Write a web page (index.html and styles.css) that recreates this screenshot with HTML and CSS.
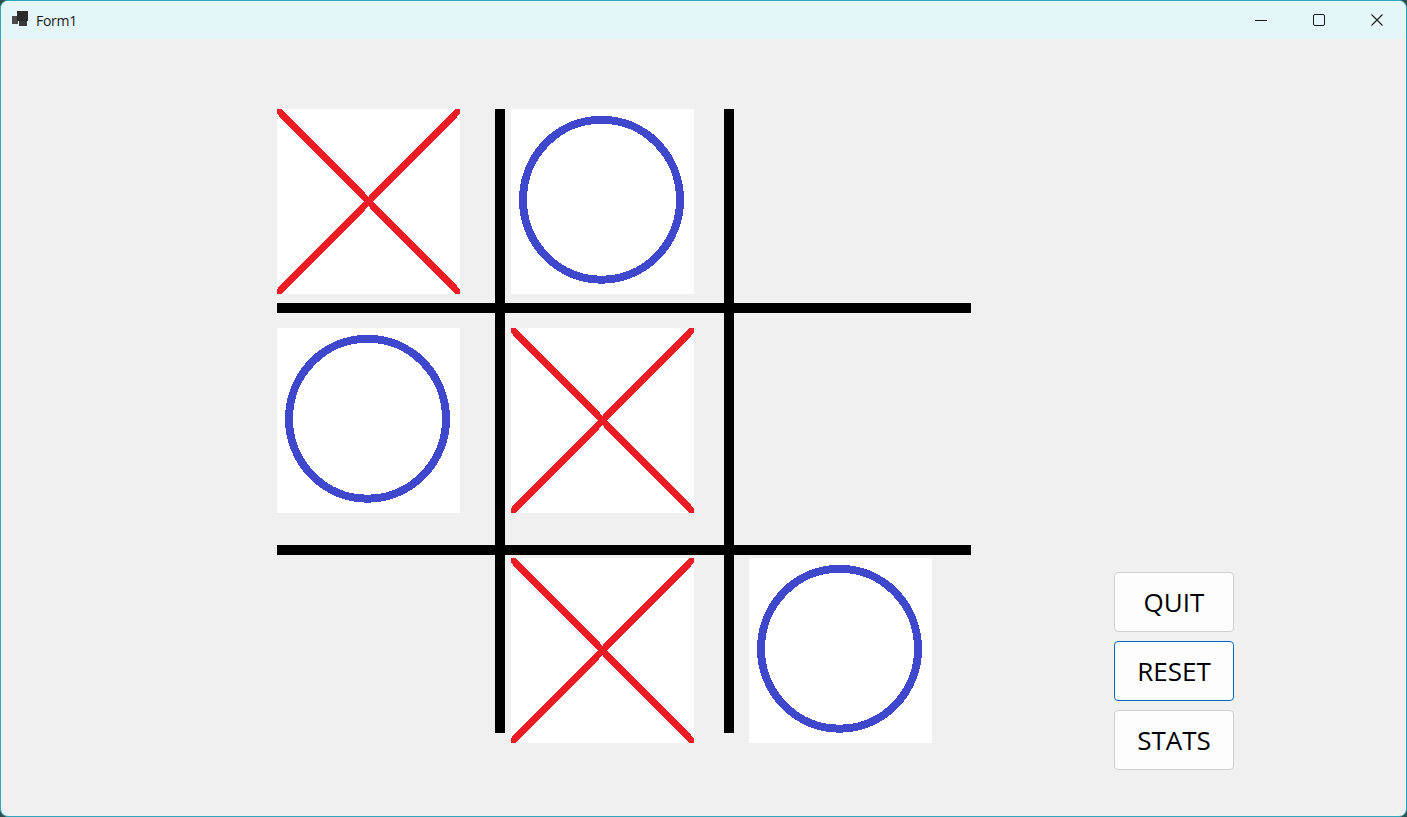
FILE: index.html
```html
<!DOCTYPE html>
<html lang="en">
<head>
  <meta charset="UTF-8" />
  <meta name="viewport" content="width=device-width, initial-scale=1.0"/>
  <title>Form1</title>
  <link rel="stylesheet" href="styles.css">
</head>
<body>
  <div class="window">
    <div class="titlebar">
      <svg class="app-icon" width="16" height="16" viewBox="0 0 16 16">
        <rect x="0" y="5" width="6" height="8" fill="#4a4a4a"/>
        <rect x="5" y="0" width="11" height="10" fill="#2b2b2b"/>
        <rect x="7" y="10" width="8" height="5" fill="#3a3a3a"/>
      </svg>
      <span class="title">Form1</span>
      <div class="controls">
        <span class="ctl">
          <svg width="12" height="12" viewBox="0 0 12 12"><line x1="0" y1="6.5" x2="12" y2="6.5" stroke="#1b1b1b" stroke-width="1"/></svg>
        </span>
        <span class="ctl">
          <svg width="12" height="12" viewBox="0 0 12 12"><rect x="0.5" y="0.5" width="11" height="11" rx="1.5" fill="none" stroke="#1b1b1b" stroke-width="1"/></svg>
        </span>
        <span class="ctl">
          <svg width="12" height="12" viewBox="0 0 12 12"><path d="M0.5 0.5 L11.5 11.5 M11.5 0.5 L0.5 11.5" stroke="#1b1b1b" stroke-width="1.1"/></svg>
        </span>
      </div>
    </div>

    <div class="client">
      <div class="board">
        <!-- row 1 -->
        <div class="cell r1 c1">
          <svg width="183" height="185" viewBox="0 0 183 185" shape-rendering="crispEdges">
            <path d="M0 0 L183 185 M183 0 L0 185" class="mark-x"/>
          </svg>
        </div>
        <div class="cell r1 c2">
          <svg width="183" height="185" viewBox="0 0 183 185" shape-rendering="crispEdges">
            <ellipse cx="90.5" cy="90.7" rx="78.5" ry="80" class="mark-o"/>
          </svg>
        </div>

        <!-- row 2 -->
        <div class="cell r2 c1">
          <svg width="183" height="185" viewBox="0 0 183 185" shape-rendering="crispEdges">
            <ellipse cx="90.5" cy="90.7" rx="78.5" ry="80" class="mark-o"/>
          </svg>
        </div>
        <div class="cell r2 c2">
          <svg width="183" height="185" viewBox="0 0 183 185" shape-rendering="crispEdges">
            <path d="M0 0 L183 185 M183 0 L0 185" class="mark-x"/>
          </svg>
        </div>

        <!-- row 3 -->
        <div class="cell r3 c2">
          <svg width="183" height="185" viewBox="0 0 183 185" shape-rendering="crispEdges">
            <path d="M0 0 L183 185 M183 0 L0 185" class="mark-x"/>
          </svg>
        </div>
        <div class="cell r3 c3">
          <svg width="183" height="185" viewBox="0 0 183 185" shape-rendering="crispEdges">
            <ellipse cx="90.5" cy="90.7" rx="78.5" ry="80" class="mark-o"/>
          </svg>
        </div>

        <!-- grid lines -->
        <div class="vline v1"></div>
        <div class="vline v2"></div>
        <div class="hline h1"></div>
        <div class="hline h2"></div>
      </div>

      <div class="buttons">
        <button class="btn">QUIT</button>
        <button class="btn focused">RESET</button>
        <button class="btn">STATS</button>
      </div>
    </div>
  </div>
</body>
</html>
```

FILE: styles.css
```css
html, body {
  margin: 0;
  height: 100%;
}

body {
  background: #2f4f4c;
  font-family: "Open Sans", "Noto Sans", sans-serif;
}

.window {
  box-sizing: border-box;
  width: 1407px;
  height: 817px;
  border: 1px solid #2fa6bd;
  border-radius: 8px;
  overflow: hidden;
  display: flex;
  flex-direction: column;
  background: #f0f0f0;
}

.titlebar {
  height: 38px;
  flex: none;
  display: flex;
  align-items: center;
  background: #e4f6f8;
}

.app-icon {
  margin-left: 11px;
  margin-top: -2px;
}

.title {
  margin-left: 8px;
  font-size: 14px;
  letter-spacing: -0.3px;
  color: #1a1a1a;
}

.controls {
  margin-left: auto;
  display: flex;
  height: 100%;
}

.ctl {
  width: 58px;
  height: 100%;
  display: flex;
  align-items: center;
  justify-content: center;
}

.client {
  flex: 1;
  display: flex;
  align-items: flex-start;
  padding: 70px 0 0 276px;
}

.board {
  display: grid;
  grid-template-columns: 183px 35px 10px 6px 183px 30px 10px 15px 183px 39px;
  grid-template-rows: 185px 9px 10px 15px 185px 32px 10px 3px 185px;
}

.cell {
  background: #fff;
  width: 183px;
  height: 185px;
}

.cell svg {
  display: block;
}

.r1 { grid-row: 1; }
.r2 { grid-row: 5; }
.r3 { grid-row: 9; }
.c1 { grid-column: 1; }
.c2 { grid-column: 5; }
.c3 { grid-column: 9; }

.mark-x {
  fill: none;
  stroke: #ed1c24;
  stroke-width: 7;
}

.mark-o {
  fill: none;
  stroke: #3f48cc;
  stroke-width: 8;
}

.vline {
  background: #000;
  grid-row: 1 / 10;
  margin-bottom: 10px;
}

.v1 { grid-column: 3; }
.v2 { grid-column: 7; }

.hline {
  background: #000;
  grid-column: 1 / 11;
}

.h1 { grid-row: 3; }
.h2 { grid-row: 7; }

.buttons {
  margin-left: 143px;
  margin-top: 463px;
  display: flex;
  flex-direction: column;
  gap: 9px;
}

.btn {
  width: 120px;
  height: 60px;
  padding: 0;
  background: #fdfdfd;
  border: 1px solid #d0d0d0;
  border-radius: 4px;
  font-family: "Open Sans", "Noto Sans", sans-serif;
  font-size: 26px;
  color: #000;
}

.focused {
  border-color: #0067c0;
}
```
